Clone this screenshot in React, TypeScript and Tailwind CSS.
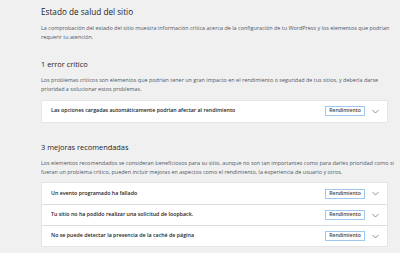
const font = { fontFamily: '"Open Sans", "Noto Sans", sans-serif' };

function Chevron() {
  return (
    <svg width="7" height="5" viewBox="0 0 14 10" className="shrink-0">
      <path d="M1 2l6 6 6-6" fill="none" stroke="#646970" strokeWidth="1.4" />
    </svg>
  );
}

function Row({ label, first }: { label: string; first?: boolean }) {
  return (
    <div
      className={
        'flex items-center h-[21px] pl-[9px] pr-[8px] ' + (first ? '' : 'border-t border-[#dcdcde]')
      }
    >
      <span className="flex-1 text-[5.3px] font-semibold text-[#1d2327]">{label}</span>
      <span className="mr-[7px] flex h-[10px] w-[40px] items-center justify-center border border-[#9ec8ef] bg-white text-[5.1px] font-semibold text-[#3c434a]">
        Rendimiento
      </span>
      <Chevron />
    </div>
  );
}

export default function App() {
  return (
    <div className="h-[253px] w-[400px] overflow-hidden bg-[#f0f0f1]" style={font}>
      <div className="w-[347px] pl-[41px] pt-[7px] box-content">
        <h1 className="text-[8.2px] font-medium leading-[10px] text-[#1d2327]">Estado de salud del sitio</h1>
        <p className="mt-[7px] -mr-[6px] text-[5.45px] leading-[8.7px] text-[#50575e]">
          La comprobación del estado del sitio muestra información crítica acerca de la configuración de tu WordPress y los elementos que podrían requerir tu atención.
        </p>

        <h2 className="mt-[19px] text-[7.4px] leading-[9px] text-[#1d2327]">1 error crítico</h2>
        <p className="mt-[7px] -mr-[6px] text-[5.45px] leading-[8.7px] text-[#50575e]">
          Los problemas críticos son elementos que podrían tener un gran impacto en el rendimiento o seguridad de tus sitios, y debería darse prioridad a solucionar estos problemas.
        </p>
        <div className="mt-[6px] border border-[#e5e5e7] bg-white">
          <Row label="Las opciones cargadas automáticamente podrían afectar al rendimiento" first />
        </div>

        <h2 className="mt-[20px] text-[7.4px] leading-[9px] text-[#1d2327]">3 mejoras recomendadas</h2>
        <p className="mt-[7px] -mr-[6px] text-[5.45px] leading-[8.7px] text-[#50575e]">
          Los elementos recomendados se consideran beneficiosos para su sitio, aunque no son tan importantes como para darles prioridad como si fueran un problema crítico, pueden incluir mejoras en aspectos como el rendimiento, la experiencia de usuario y otros.
        </p>
        <div className="mt-[6px] border border-[#e5e5e7] bg-white">
          <Row label="Un evento programado ha fallado" first />
          <Row label="Tu sitio no ha podido realizar una solicitud de loopback." />
          <Row label="No se puede detectar la presencia de la caché de página" />
        </div>
      </div>
    </div>
  );
}
